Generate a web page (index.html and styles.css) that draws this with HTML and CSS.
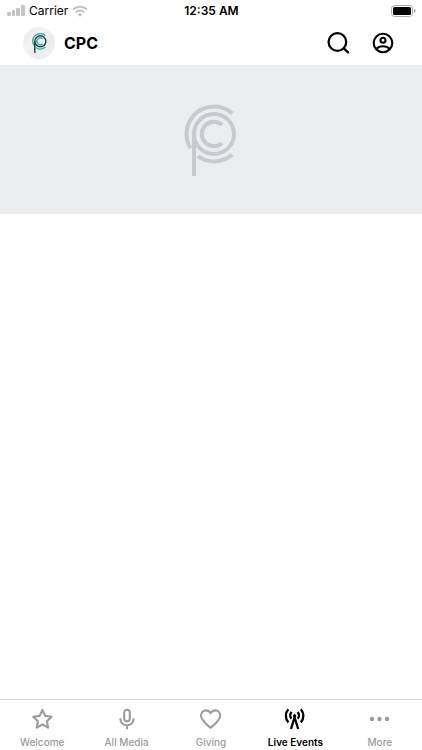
FILE: index.html
```
<!DOCTYPE html>
<html lang="en">
<head>
    <meta charset="UTF-8">
    <meta name="viewport" content="width=device-width, initial-scale=1.0">
    <title>CPC - Live Events</title>
    <link rel="stylesheet" href="styles.css">
</head>
<body>
    <svg class="defs" width="0" height="0" aria-hidden="true">
        <symbol id="logo" viewBox="0 0 54 72">
            <g fill="none" stroke="currentColor">
                <g class="logo-accent">
                    <path d="M48.2 9.4A27.5 27.5 0 0 0 2.5 30A27.5 27.5 0 0 0 6.5 44.3"/>
                    <path d="M13.7 52.2A27.5 27.5 0 0 0 48.2 50.6"/>
                    <path d="M38 20.8A12.2 12.2 0 1 0 38 39.2"/>
                </g>
                <circle cx="30" cy="30" r="20"/>
                <path d="M10 72V30"/>
            </g>
        </symbol>
    </svg>

    <div class="status-bar">
        <div class="status-left">
            <svg width="18" height="12" viewBox="0 0 18 12" fill="#c4c4c4">
                <rect x="0" y="7" width="4" height="4" rx="1"/>
                <rect x="5" y="5" width="3" height="6" rx="1"/>
                <rect x="9" y="3" width="4" height="8" rx="1"/>
                <rect x="14" y="0" width="4" height="11" rx="1"/>
            </svg>
            <span>Carrier</span>
            <svg width="16" height="12" viewBox="0 0 16 12" fill="none" stroke="#c4c4c4" stroke-width="2">
                <path d="M1 4.6a10 10 0 0 1 14 0"/>
                <path d="M3.6 7.4a6.2 6.2 0 0 1 8.8 0"/>
                <path d="M8 11.8L5.6 9.4a3.4 3.4 0 0 1 4.8 0z" fill="#c4c4c4" stroke="none"/>
            </svg>
        </div>
        <span class="time">12:35 AM</span>
        <div class="status-right">
            <svg width="25" height="12" viewBox="0 0 25 12">
                <rect x="0.5" y="0.5" width="21" height="11" rx="3" fill="#fff" stroke="#a8a8a8"/>
                <rect x="2" y="2" width="18" height="8" rx="1.5"/>
                <path d="M23 4c2 .6 2 3.4 0 4z" fill="#a8a8a8"/>
            </svg>
        </div>
    </div>

    <header class="header">
        <span class="avatar">
            <svg class="avatar-logo" width="15" height="20"><use href="#logo"/></svg>
        </span>
        <h1>CPC</h1>
        <button type="button" aria-label="Search">
            <svg width="24" height="24" viewBox="0 0 24 24" fill="none" stroke="#000" stroke-width="2.3" stroke-linecap="round">
                <circle cx="10.4" cy="11" r="8.8"/>
                <path d="M16.8 17.4L21 21.4"/>
            </svg>
        </button>
        <button type="button" aria-label="Profile">
            <svg width="24" height="24" viewBox="0 0 24 24" fill="none" stroke="#000" stroke-width="2.1">
                <circle cx="12" cy="12" r="9.3"/>
                <circle cx="12" cy="9.2" r="2.5"/>
                <path d="M5.4 18c3-3.6 10.2-3.6 13.2 0"/>
            </svg>
        </button>
    </header>

    <main>
        <div class="banner">
            <svg class="banner-logo" width="54" height="72"><use href="#logo"/></svg>
        </div>
    </main>

    <nav class="tab-bar">
        <a href="#welcome">
            <svg width="24" height="24" viewBox="0 0 24 24" fill="none" stroke="currentColor" stroke-width="2.1" stroke-linejoin="round">
                <path d="M12.4 2.9l2.8 6 6.4.8-4.7 4.5 1.2 6.5-5.7-3.2-5.7 3.2 1.2-6.5-4.7-4.5 6.4-.8z"/>
            </svg>
            <span>Welcome</span>
        </a>
        <a href="#media">
            <svg width="24" height="24" viewBox="0 0 24 24" fill="none" stroke="currentColor" stroke-width="2.1" stroke-linecap="round">
                <rect x="9.2" y="2.8" width="5.6" height="11.6" rx="2.8"/>
                <path d="M5.4 12a6.6 6.3 0 0 0 13.2 0M12 18.4v3"/>
            </svg>
            <span>All Media</span>
        </a>
        <a href="#giving">
            <svg width="24" height="24" viewBox="0 0 24 24" fill="none" stroke="currentColor" stroke-width="2.1" stroke-linejoin="round">
                <path d="M11.6 20.8C8 17.8 2 13.4 2 8.6 2 5.6 4.2 3.4 6.8 3.4c2 0 3.8 1 4.8 2.8 1-1.8 2.8-2.8 4.8-2.8 2.6 0 4.8 2.2 4.8 5.2 0 4.8-6 9.2-9.6 12.2z"/>
            </svg>
            <span>Giving</span>
        </a>
        <a href="#live" class="active" aria-current="page">
            <svg width="24" height="24" viewBox="0 0 24 24" fill="none" stroke="currentColor" stroke-width="2.3">
                <path d="M5.4 2.2c-3.4 3.6-3.4 9.6 0 13.2M17.8 2.2c3.4 3.6 3.4 9.6 0 13.2"/>
                <path d="M8.6 5c-1.7 2-1.7 4.8-.2 6.8M14.6 5c1.7 2 1.7 4.8.2 6.8"/>
                <path d="M8 22L11.6 10.4 15.2 22"/>
                <circle cx="11.6" cy="9" r="1.7" fill="currentColor" stroke="none"/>
            </svg>
            <span>Live Events</span>
        </a>
        <a href="#more">
            <svg width="24" height="24" viewBox="0 0 24 24" fill="currentColor">
                <circle cx="4" cy="12" r="2.2"/>
                <circle cx="11.5" cy="12" r="2.2"/>
                <circle cx="19" cy="12" r="2.2"/>
            </svg>
            <span>More</span>
        </a>
    </nav>
</body>
</html>
```

FILE: styles.css
```
body {
    font-family: Inter, "Liberation Sans", sans-serif;
    display: flex;
    flex-direction: column;
    min-height: 100vh;
    margin: 0;
    background-color: #fff;
    color: #000;
}
svg {
    display: block;
}
.defs {
    position: absolute;
}
.status-bar {
    display: grid;
    grid-template-columns: 1fr auto 1fr;
    align-items: center;
    height: 21px;
    padding: 0 6px 0 7px;
    font-size: 12px;
}
.status-left {
    display: flex;
    align-items: center;
    gap: 4px;
}
.status-right {
    display: flex;
    justify-content: flex-end;
}
.time {
    font-weight: 600;
}
.header {
    display: flex;
    align-items: center;
    height: 44px;
    padding: 0 27px 0 23px;
}
.header h1 {
    flex: 1;
    margin: 0 0 0 9px;
    font-size: 16px;
    font-weight: 700;
}
.header button {
    margin-left: 20px;
    padding: 0;
    border: none;
    background: none;
    cursor: pointer;
}
.avatar {
    display: flex;
    justify-content: center;
    align-items: center;
    width: 32px;
    height: 32px;
    border-radius: 50%;
    background: linear-gradient(135deg, #e9e9e9, #f4f4f4 40%, #ebebeb 60%, #f3f3f3);
}
.avatar-logo {
    --accent: #2bb5a0;
    color: #1d3d45;
    stroke-width: 5;
}
.logo-accent {
    stroke: var(--accent, currentColor);
}
main {
    flex: 1;
}
.banner {
    display: flex;
    justify-content: center;
    align-items: center;
    height: 149px;
    background-color: #ecedef;
}
.banner-logo {
    color: #c9cacf;
    stroke-width: 4;
}
.tab-bar {
    display: flex;
    height: 50px;
    border-top: 1px solid #dcdcdc;
}
.tab-bar a {
    flex: 1;
    display: flex;
    flex-direction: column;
    align-items: center;
    gap: 5px;
    padding-top: 7px;
    color: #9c9c9c;
    font-size: 10px;
    font-weight: 500;
    line-height: 12px;
    text-decoration: none;
    white-space: nowrap;
}
.tab-bar .active {
    color: #000;
    font-weight: 600;
}
```
